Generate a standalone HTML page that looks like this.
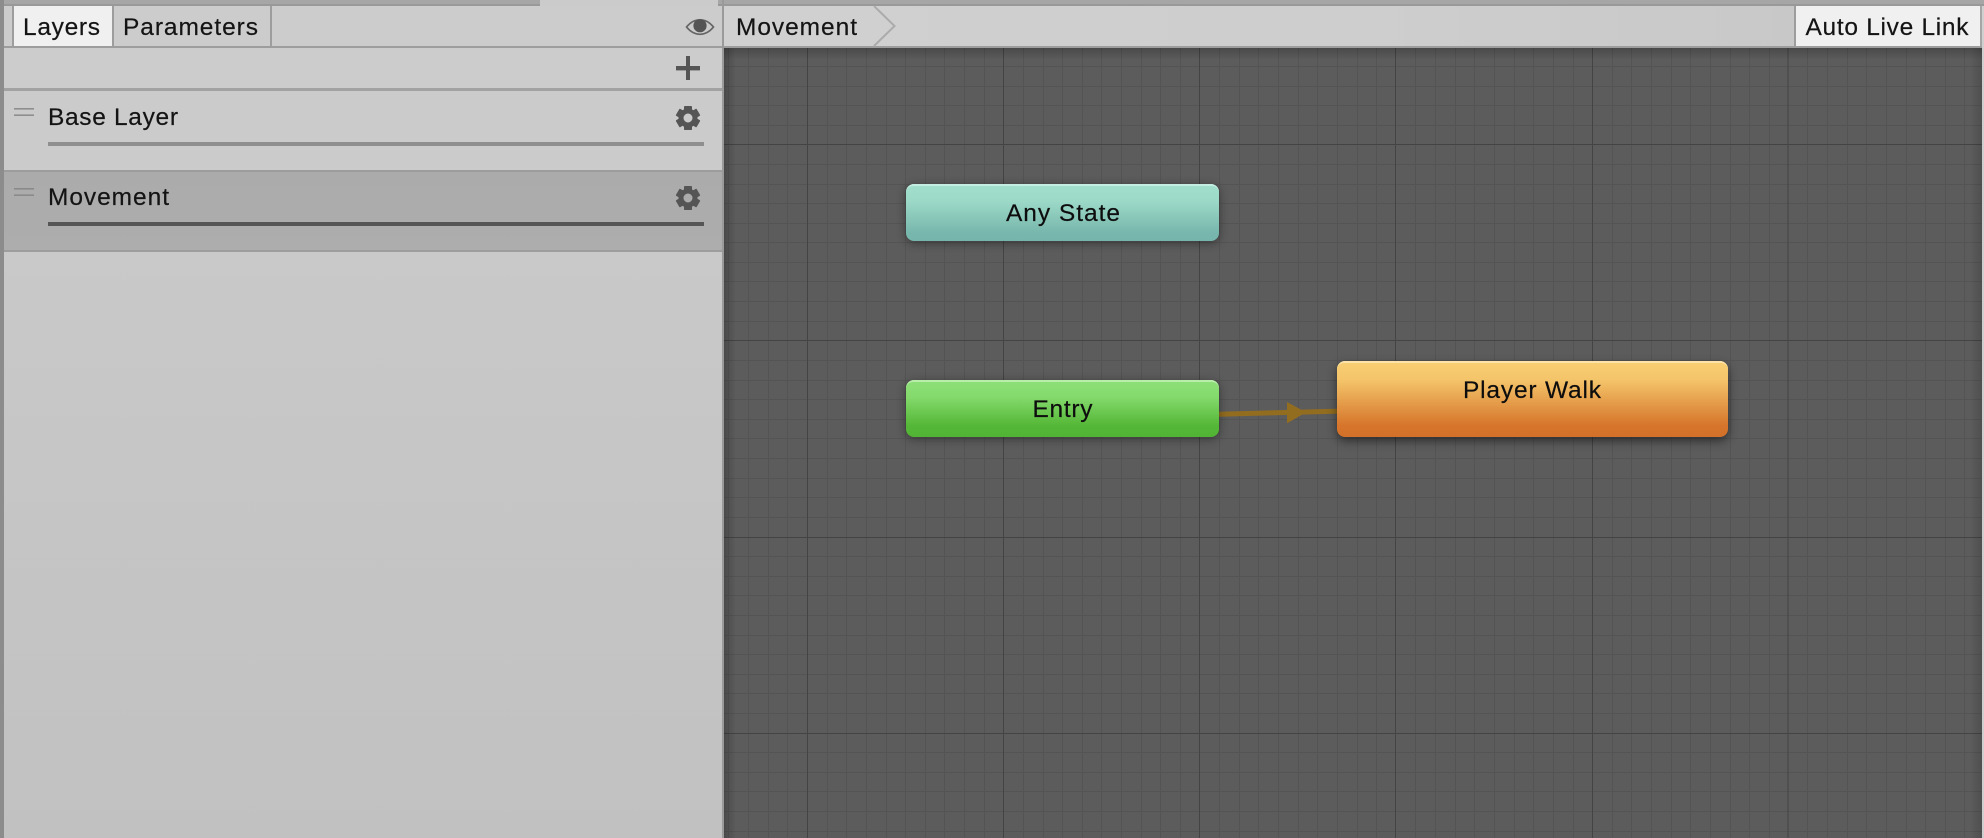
<!DOCTYPE html>
<html lang="en">
<head>
<meta charset="utf-8">
<title>Animator</title>
<style>
html,body{margin:0;padding:0;width:1984px;height:838px;overflow:hidden;background:#c2c2c2}
svg{display:block}
text{font-family:"Liberation Sans",Arial,sans-serif;font-size:24.5px;fill:#141414;stroke:#141414;stroke-width:.2px}
</style>
</head>
<body>
<svg xmlns="http://www.w3.org/2000/svg" width="1984" height="838" viewBox="0 0 1984 838">
<defs>
<linearGradient id="panel" x1="0" y1="0" x2="0" y2="1"><stop offset="0" stop-color="#c9c9c9"/><stop offset=".35" stop-color="#c6c6c6"/><stop offset="1" stop-color="#c1c1c1"/></linearGradient>
<linearGradient id="sel" x1="0" y1="0" x2="0" y2="1"><stop offset="0" stop-color="#ababab"/><stop offset="1" stop-color="#adadad"/></linearGradient>
<linearGradient id="crumb" x1="0" y1="0" x2="1" y2="0"><stop offset="0" stop-color="#d0d0d0"/><stop offset=".5" stop-color="#cecece"/><stop offset="1" stop-color="#c6c6c6"/></linearGradient>
<linearGradient id="any" x1="0" y1="0" x2="0" y2="1"><stop offset="0" stop-color="#a2e0cd"/><stop offset=".3" stop-color="#9cd9c7"/><stop offset=".85" stop-color="#78b7ad"/><stop offset="1" stop-color="#76b5ab"/></linearGradient>
<linearGradient id="entry" x1="0" y1="0" x2="0" y2="1"><stop offset="0" stop-color="#8ee079"/><stop offset=".3" stop-color="#84da6c"/><stop offset=".8" stop-color="#55b737"/><stop offset="1" stop-color="#52b434"/></linearGradient>
<linearGradient id="walk" x1="0" y1="0" x2="0" y2="1"><stop offset="0" stop-color="#f9cf74"/><stop offset=".25" stop-color="#f4c469"/><stop offset=".85" stop-color="#d6752b"/><stop offset="1" stop-color="#d37029"/></linearGradient>
<linearGradient id="shL" x1="0" y1="0" x2="1" y2="0"><stop offset="0" stop-color="#000" stop-opacity=".2"/><stop offset="1" stop-color="#000" stop-opacity="0"/></linearGradient>
<linearGradient id="shR" x1="1" y1="0" x2="0" y2="0"><stop offset="0" stop-color="#000" stop-opacity=".14"/><stop offset="1" stop-color="#000" stop-opacity="0"/></linearGradient>
<linearGradient id="shT" x1="0" y1="0" x2="0" y2="1"><stop offset="0" stop-color="#000" stop-opacity=".2"/><stop offset="1" stop-color="#000" stop-opacity="0"/></linearGradient>
<filter id="sh" x="-10%" y="-30%" width="120%" height="170%"><feGaussianBlur stdDeviation="5"/></filter>
<g id="gear">
<circle r="7" fill="none" stroke="#555" stroke-width="5"/>
<rect x="-4" y="-12" width="8" height="5.5" rx=".8" fill="#555"/>
<rect x="-4" y="-12" width="8" height="5.5" rx=".8" fill="#555" transform="rotate(60)"/>
<rect x="-4" y="-12" width="8" height="5.5" rx=".8" fill="#555" transform="rotate(120)"/>
<rect x="-4" y="-12" width="8" height="5.5" rx=".8" fill="#555" transform="rotate(180)"/>
<rect x="-4" y="-12" width="8" height="5.5" rx=".8" fill="#555" transform="rotate(240)"/>
<rect x="-4" y="-12" width="8" height="5.5" rx=".8" fill="#555" transform="rotate(300)"/>
</g>
</defs>

<!-- top strip -->
<rect width="1984" height="838" fill="#c2c2c2"/>
<rect x="0" y="0" width="540" height="4" fill="#a6a6a6"/>
<rect x="0" y="4" width="540" height="2" fill="#999"/>
<rect x="540" y="0" width="178" height="6" fill="#cbcbcb"/>
<rect x="718" y="0" width="1266" height="4" fill="#a6a6a6"/>
<rect x="718" y="4" width="1266" height="2" fill="#999"/>

<!-- left panel -->
<rect x="4" y="6" width="718" height="40" fill="#cccccc"/>
<rect x="4" y="46" width="718" height="2" fill="#9d9d9d"/>
<rect x="4" y="48" width="718" height="40" fill="#cccccc"/>
<rect x="4" y="88" width="718" height="3" fill="#a2a2a2"/>
<rect x="4" y="91" width="718" height="79" fill="#cbcbcb"/>
<rect x="4" y="170" width="718" height="2" fill="#9d9d9d"/>
<rect x="4" y="172" width="718" height="78" fill="url(#sel)"/>
<rect x="4" y="250" width="718" height="2" fill="#9d9d9d"/>
<rect x="4" y="252" width="718" height="586" fill="url(#panel)"/>
<rect x="0" y="0" width="4" height="838" fill="#8c8c8c"/>
<rect x="722" y="0" width="2" height="838" fill="#9a9a9a"/>

<!-- tabs -->
<rect x="12" y="6" width="2" height="40" fill="#9d9d9d"/>
<rect x="14" y="6" width="98" height="40" fill="#f0f0f0"/>
<rect x="112" y="6" width="2" height="40" fill="#9d9d9d"/>
<rect x="270" y="6" width="2" height="40" fill="#9d9d9d"/>
<text x="23" y="35" textLength="77" lengthAdjust="spacing">Layers</text>
<text x="123" y="35" textLength="135" lengthAdjust="spacing">Parameters</text>

<!-- eye -->
<path d="M686.5 27C691 21.5 695.5 19.8 700 19.8S709 21.5 713.5 27C709 32.5 704.5 34.3 700 34.3S691 32.5 686.5 27Z" fill="none" stroke="#666" stroke-width="1.7"/>
<circle cx="700" cy="25.7" r="6.6" fill="#555"/>

<!-- plus -->
<rect x="686" y="56" width="4" height="24" fill="#555"/>
<rect x="676" y="66" width="24" height="4.4" fill="#555"/>

<!-- Base Layer -->
<rect x="14" y="108" width="20" height="1.6" fill="#8e8e8e"/>
<rect x="14" y="114.4" width="20" height="1.6" fill="#8e8e8e"/>
<text x="48" y="125" textLength="130" lengthAdjust="spacing">Base Layer</text>
<rect x="48" y="142" width="656" height="4" fill="#8f8f8f"/>
<use href="#gear" x="688" y="118"/>

<!-- Movement layer -->
<rect x="14" y="188" width="20" height="1.6" fill="#8a8a8a"/>
<rect x="14" y="194.4" width="20" height="1.6" fill="#8a8a8a"/>
<text x="48" y="205" textLength="121" lengthAdjust="spacing">Movement</text>
<rect x="48" y="222" width="656" height="4" fill="#555"/>
<use href="#gear" x="688" y="198"/>

<!-- breadcrumb bar -->
<rect x="724" y="6" width="1256" height="40" fill="url(#crumb)"/>
<rect x="724" y="46" width="1260" height="2" fill="#9d9d9d"/>
<rect x="724" y="6" width="150" height="40" fill="#d0d0d0"/>
<path d="M874 6L894.5 26L874 46" fill="#d0d0d0" stroke="#ababab" stroke-width="2"/>
<text x="736" y="35" textLength="121" lengthAdjust="spacing">Movement</text>
<rect x="1794" y="6" width="2" height="40" fill="#9d9d9d"/>
<rect x="1796" y="6" width="184" height="40" fill="#f0f0f0"/>
<rect x="1980" y="6" width="2" height="40" fill="#a6a6a6"/>
<rect x="1982" y="6" width="2" height="832" fill="#cfcfcf"/>
<text x="1805.5" y="35" textLength="163" lengthAdjust="spacing">Auto Live Link</text>

<!-- graph -->
<rect x="724" y="48" width="1258" height="790" fill="#5c5c5c"/>
<g shape-rendering="crispEdges" fill="none">
<path stroke="#545454" stroke-width="1" d="M728.5 48V838M748.5 48V838M768.5 48V838M787.5 48V838M827.5 48V838M846.5 48V838M866.5 48V838M886.5 48V838M905.5 48V838M925.5 48V838M944.5 48V838M964.5 48V838M984.5 48V838M1023.5 48V838M1043.5 48V838M1062.5 48V838M1082.5 48V838M1101.5 48V838M1121.5 48V838M1141.5 48V838M1160.5 48V838M1180.5 48V838M1219.5 48V838M1239.5 48V838M1258.5 48V838M1278.5 48V838M1298.5 48V838M1317.5 48V838M1337.5 48V838M1357.5 48V838M1376.5 48V838M1415.5 48V838M1435.5 48V838M1455.5 48V838M1474.5 48V838M1494.5 48V838M1514.5 48V838M1533.5 48V838M1553.5 48V838M1573.5 48V838M1612.5 48V838M1631.5 48V838M1651.5 48V838M1671.5 48V838M1690.5 48V838M1710.5 48V838M1730.5 48V838M1749.5 48V838M1769.5 48V838M1807.5 48V838M1827.5 48V838M1847.5 48V838M1866.5 48V838M1886.5 48V838M1906.5 48V838M1925.5 48V838M1945.5 48V838M1964.5 48V838"/>
<path stroke="#545454" stroke-width="1" d="M724 66.5H1982M724 86.5H1982M724 105.5H1982M724 125.5H1982M724 164.5H1982M724 184.5H1982M724 203.5H1982M724 223.5H1982M724 242.5H1982M724 262.5H1982M724 281.5H1982M724 301.5H1982M724 321.5H1982M724 360.5H1982M724 380.5H1982M724 399.5H1982M724 419.5H1982M724 438.5H1982M724 458.5H1982M724 478.5H1982M724 497.5H1982M724 517.5H1982M724 556.5H1982M724 576.5H1982M724 595.5H1982M724 615.5H1982M724 635.5H1982M724 654.5H1982M724 674.5H1982M724 693.5H1982M724 713.5H1982M724 752.5H1982M724 772.5H1982M724 791.5H1982M724 811.5H1982M724 831.5H1982"/>
<path stroke="#444444" stroke-width="1" d="M807.5 48V838M1003.5 48V838M1199.5 48V838M1395.5 48V838M1592.5 48V838M1788 48V838M724 144.5H1982M724 340.5H1982M724 537.5H1982M724 733.5H1982"/>
</g>
<rect x="724" y="48" width="12" height="790" fill="url(#shL)"/>
<rect x="1970" y="48" width="12" height="790" fill="url(#shR)"/>
<rect x="724" y="48" width="1258" height="12" fill="url(#shT)"/>

<!-- transition -->
<path d="M1219 414.2L1337 411.2" stroke="#936d1f" stroke-width="5" fill="none"/>
<path d="M1287 402L1306 412.4L1287 423.4Z" fill="#936d1f"/>

<!-- nodes -->
<rect x="906" y="186" width="313" height="57" rx="8" fill="#000" opacity=".4" filter="url(#sh)"/>
<rect x="906" y="184" width="313" height="57" rx="8" fill="url(#any)"/>
<path d="M906 192a8 8 0 0 1 8-8h297a8 8 0 0 1 8 8a7 7 0 0 0-7-6H913a7 7 0 0 0-7 6Z" fill="#c4eee1"/>
<text x="1006" y="221" textLength="114" lengthAdjust="spacing" style="fill:#0d0d0d">Any State</text>

<rect x="906" y="382" width="313" height="57" rx="8" fill="#000" opacity=".4" filter="url(#sh)"/>
<rect x="906" y="380" width="313" height="57" rx="8" fill="url(#entry)"/>
<path d="M906 388a8 8 0 0 1 8-8h297a8 8 0 0 1 8 8a7 7 0 0 0-7-6H913a7 7 0 0 0-7 6Z" fill="#b9eeaa"/>
<text x="1032.5" y="417" textLength="60" lengthAdjust="spacing" style="fill:#0d0d0d">Entry</text>

<rect x="1337" y="365" width="391" height="76" rx="8" fill="#000" opacity=".5" filter="url(#sh)"/>
<rect x="1337" y="361" width="391" height="76" rx="8" fill="url(#walk)"/>
<path d="M1337 369a8 8 0 0 1 8-8h375a8 8 0 0 1 8 8a7 7 0 0 0-7-6H1344a7 7 0 0 0-7 6Z" fill="#fde3a8"/>
<text x="1463" y="398" textLength="138" lengthAdjust="spacing" style="fill:#0d0d0d">Player Walk</text>
</svg>
</body>
</html>
